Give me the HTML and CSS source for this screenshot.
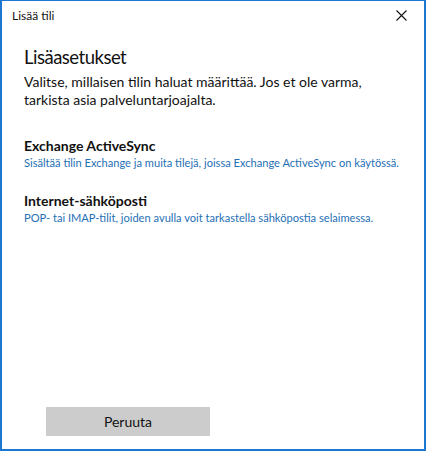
FILE: index.html
```html
<!DOCTYPE html>
<html lang="fi">
<head>
    <meta charset="UTF-8">
    <meta name="viewport" content="width=device-width, initial-scale=1.0">
    <title>Lisää tili</title>
    <link rel="stylesheet" href="styles.css">
</head>
<body>

    <div class="window">
        <div class="titlebar">
            <span class="title">Lisää tili</span>
            <svg class="close" width="11" height="11" viewBox="0 0 11 11">
                <path d="M0.5 0.5 L10.5 10.5 M10.5 0.5 L0.5 10.5" stroke="#111" stroke-width="1.1" fill="none"/>
            </svg>
        </div>

        <div class="content">
            <h1>Lisäasetukset</h1>
            <p class="intro">Valitse, millaisen tilin haluat määrittää. Jos et ole varma, tarkista asia palveluntarjoajalta.</p>

            <div class="option">
                <h2>Exchange ActiveSync</h2>
                <p>Sisältää tilin Exchange ja muita tilejä, joissa Exchange ActiveSync on käytössä.</p>
            </div>

            <div class="option">
                <h2>Internet-sähköposti</h2>
                <p>POP- tai IMAP-tilit, joiden avulla voit tarkastella sähköpostia selaimessa.</p>
            </div>
        </div>

        <div class="footer">
            <button>Peruuta</button>
        </div>
    </div>

</body>
</html>
```

FILE: styles.css
```css
html, body {
    margin: 0;
    padding: 0;
    background: #fff;
}
body {
    font-family: Lato, "Noto Sans", sans-serif;
    color: #111;
}
.window {
    box-sizing: border-box;
    width: 426px;
    height: 451px;
    border: 2px solid #1b77d2;
    border-top-width: 1px;
    display: flex;
    flex-direction: column;
    background: #fff;
}
.titlebar {
    height: 29px;
    display: flex;
    align-items: center;
    justify-content: space-between;
    padding: 0 17px 0 10px;
}
.title {
    font-size: 12px;
}
.close {
    display: block;
}
.content {
    flex: 1;
    padding: 15px 22px 0;
}
h1 {
    font-size: 18.5px;
    font-weight: 400;
    letter-spacing: -0.5px;
    margin: 0;
    line-height: 24px;
}
.intro {
    font-size: 14px;
    line-height: 18px;
    margin: 4px 0 0;
}
.option {
    margin-top: 28px;
}
.option + .option {
    margin-top: 22px;
}
.option h2 {
    font-size: 14px;
    font-weight: 700;
    margin: 0;
    line-height: 18px;
}
.option p {
    font-size: 11.1px;
    color: #1f6fb5;
    margin: 0;
    line-height: 15px;
    white-space: nowrap;
}
.footer {
    padding: 0 0 13px 44px;
}
.footer button {
    width: 164px;
    height: 29px;
    background: #cccccc;
    border: none;
    font-family: inherit;
    font-size: 14px;
    color: #111;
}
```
